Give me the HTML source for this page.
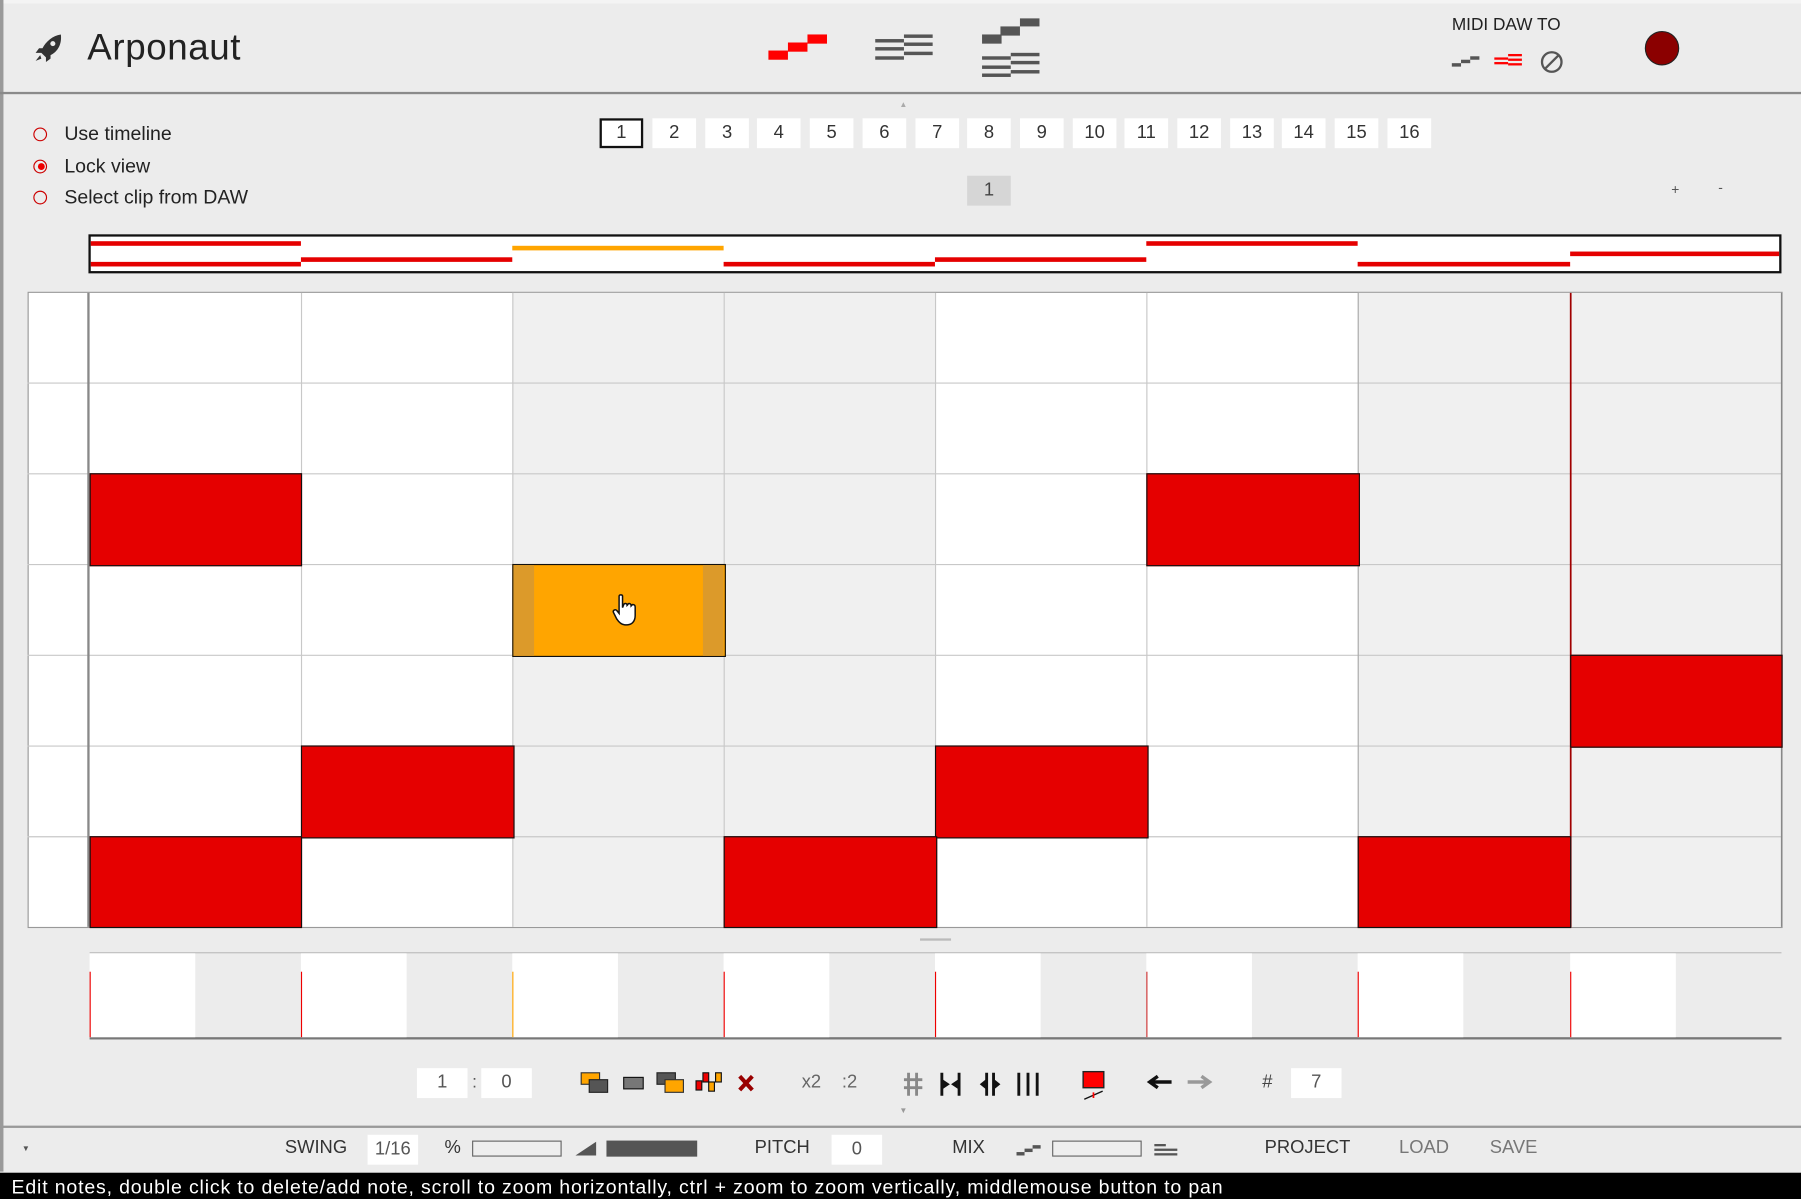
<!DOCTYPE html>
<html><head><meta charset="utf-8">
<style>
html,body{margin:0;padding:0;width:1801px;height:1199px;overflow:hidden;background:#ececec}
#w{position:absolute;left:0;top:0;width:1568px;height:1044px;transform:scale(1.1486);transform-origin:0 0;background:#ececec;font-family:"Liberation Sans",sans-serif;color:#222}
.a{position:absolute}
.t{position:absolute;white-space:nowrap;line-height:1}
.nb{position:absolute;top:103px;width:38px;height:26px;background:#fff;font-size:16px;text-align:center;line-height:26px;color:#333}
.radio{position:absolute;left:29px;width:12px;height:12px;border:1.5px solid #c00;border-radius:50%;box-sizing:border-box}
.note{position:absolute;background:#e50000;border:1px solid #111;box-sizing:border-box}
.ov{position:absolute;height:4px;background:#e50000}
.box{position:absolute;background:#fff;height:26px;top:930px;text-align:center;line-height:26px;font-size:16px;color:#555}
.g{position:absolute;background:#555;height:3px}
</style></head><body><div id="w">
<div class="a" style="left:0;top:0;width:1568px;height:3px;background:#f4f4f4"></div>
<div class="a" style="left:0;top:0;width:3px;height:1020px;background:#9a9a9a"></div>
<svg class="a" style="left:28px;top:28px" width="30" height="28" viewBox="0 0 30 28">
<path d="M25 2 C18 3 12 8 9 14 L6 14 L3 18 L8 18 L12 22 L12 26 L16 23 L16 20 C22 17 26 11 25 2Z" fill="#333"/>
<circle cx="18" cy="10" r="2.2" fill="#ececec"/>
<path d="M7 20 L3 25 L8 23Z" fill="#333"/></svg>
<div class="t" style="left:76px;top:25px;font-size:32px;color:#222;letter-spacing:0.5px">Arponaut</div>
<!-- mode icons -->
<div class="a" style="left:669px;top:44px;width:17px;height:8px;background:#f00"></div>
<div class="a" style="left:686px;top:37px;width:17px;height:8px;background:#f00"></div>
<div class="a" style="left:703px;top:30px;width:17px;height:8px;background:#f00"></div>
<div class="g" style="left:762px;top:34px;width:25px"></div>
<div class="g" style="left:762px;top:41px;width:25px"></div>
<div class="g" style="left:762px;top:49px;width:25px"></div>
<div class="g" style="left:787px;top:30px;width:25px"></div>
<div class="g" style="left:787px;top:37px;width:25px"></div>
<div class="g" style="left:787px;top:45px;width:25px"></div>
<div class="a" style="left:855px;top:30px;width:17px;height:8px;background:#555"></div>
<div class="a" style="left:871px;top:23px;width:17px;height:8px;background:#555"></div>
<div class="a" style="left:888px;top:16px;width:17px;height:7px;background:#555"></div>
<div class="g" style="left:855px;top:49px;width:25px"></div>
<div class="g" style="left:855px;top:57px;width:25px"></div>
<div class="g" style="left:855px;top:64px;width:25px"></div>
<div class="g" style="left:880px;top:46px;width:25px"></div>
<div class="g" style="left:880px;top:53px;width:25px"></div>
<div class="g" style="left:880px;top:61px;width:25px"></div>
<div class="t" style="left:1264px;top:14px;font-size:15px;color:#222">MIDI DAW TO</div>
<div class="a" style="left:1264px;top:55px;width:8px;height:3px;background:#555"></div>
<div class="a" style="left:1272px;top:52px;width:8px;height:3px;background:#555"></div>
<div class="a" style="left:1280px;top:49px;width:8px;height:3px;background:#555"></div>
<div class="a" style="left:1301px;top:50px;width:12px;height:2px;background:#f00"></div>
<div class="a" style="left:1301px;top:54px;width:12px;height:2px;background:#f00"></div>
<div class="a" style="left:1313px;top:47px;width:12px;height:2px;background:#f00"></div>
<div class="a" style="left:1313px;top:51px;width:12px;height:2px;background:#f00"></div>
<div class="a" style="left:1313px;top:55px;width:12px;height:2px;background:#f00"></div>
<svg class="a" style="left:1340px;top:43px" width="22" height="22"><circle cx="11" cy="11" r="8.5" fill="none" stroke="#555" stroke-width="2"/><line x1="5" y1="17" x2="17" y2="5" stroke="#555" stroke-width="2"/></svg>
<div class="a" style="left:1432px;top:27px;width:30px;height:30px;border-radius:50%;background:#8b0000;border:1px solid #222;box-sizing:border-box"></div>
<div class="a" style="left:0;top:80px;width:1568px;height:2px;background:#8a8a8a"></div>
<div class="t" style="left:783px;top:88px;font-size:7px;color:#aaa">▲</div>
<div class="radio" style="top:111px"></div>
<div class="t" style="left:56px;top:108px;font-size:17px">Use timeline</div>
<div class="radio" style="top:139px"></div><div class="a" style="left:33px;top:142px;width:6px;height:6px;border-radius:50%;background:#e00"></div>
<div class="t" style="left:56px;top:136px;font-size:17px">Lock view</div>
<div class="radio" style="top:166px"></div>
<div class="t" style="left:56px;top:163px;font-size:17px">Select clip from DAW</div>
<div class="nb" style="left:522px;border:2px solid #111;box-sizing:border-box;line-height:22px">1</div>
<div class="nb" style="left:568px">2</div><div class="nb" style="left:614px">3</div><div class="nb" style="left:659px">4</div>
<div class="nb" style="left:705px">5</div><div class="nb" style="left:751px">6</div><div class="nb" style="left:797px">7</div>
<div class="nb" style="left:842px">8</div><div class="nb" style="left:888px">9</div><div class="nb" style="left:934px">10</div>
<div class="nb" style="left:979px">11</div><div class="nb" style="left:1025px">12</div><div class="nb" style="left:1071px">13</div>
<div class="nb" style="left:1116px">14</div><div class="nb" style="left:1162px">15</div><div class="nb" style="left:1208px">16</div>
<div class="a" style="left:842px;top:153px;width:38px;height:26px;background:#d6d6d6;font-size:16px;text-align:center;line-height:26px;color:#444">1</div>
<div class="t" style="left:1455px;top:159px;font-size:12px;color:#555">+</div>
<div class="t" style="left:1496px;top:157px;font-size:12px;color:#555">-</div>
<div class="a" style="left:77px;top:204px;width:1474px;height:34px;background:#fff;border:2px solid #111;box-sizing:border-box"></div>
<div class="ov" style="left:79px;width:183px;top:210px"></div>
<div class="ov" style="left:79px;width:183px;top:228px"></div>
<div class="ov" style="left:262px;width:184px;top:224px"></div>
<div class="ov" style="left:446px;width:184px;top:214px;background:#ffa500"></div>
<div class="ov" style="left:630px;width:184px;top:228px"></div>
<div class="ov" style="left:814px;width:184px;top:224px"></div>
<div class="ov" style="left:998px;width:184px;top:210px"></div>
<div class="ov" style="left:1182px;width:185px;top:228px"></div>
<div class="ov" style="left:1367px;width:182px;top:219px"></div>
<div class="a" style="left:24px;top:254px;width:1528px;height:554px;border:1px solid #999;box-sizing:border-box;background:#fff"></div>
<div class="a" style="left:446px;top:255px;width:368px;height:552px;background:#f0f0f0"></div>
<div class="a" style="left:1182px;top:255px;width:369px;height:552px;background:#f0f0f0"></div>
<svg class="a" style="left:0;top:0" width="1568" height="1044">
<g stroke="#c8c8c8" stroke-width="1">
<line x1="24" y1="333.5" x2="1551" y2="333.5"/><line x1="24" y1="412.5" x2="1551" y2="412.5"/><line x1="24" y1="491.5" x2="1551" y2="491.5"/>
<line x1="24" y1="570.5" x2="1551" y2="570.5"/><line x1="24" y1="649.5" x2="1551" y2="649.5"/><line x1="24" y1="728.5" x2="1551" y2="728.5"/>
<line x1="262.5" y1="255" x2="262.5" y2="807"/><line x1="446.5" y1="255" x2="446.5" y2="807"/><line x1="630.5" y1="255" x2="630.5" y2="807"/>
<line x1="814.5" y1="255" x2="814.5" y2="807"/><line x1="998.5" y1="255" x2="998.5" y2="807"/><line x1="1182.5" y1="255" x2="1182.5" y2="807" stroke="#aaa"/>
</g>
<line x1="77" y1="255" x2="77" y2="807" stroke="#888" stroke-width="2"/>
<line x1="1367.5" y1="255" x2="1367.5" y2="807" stroke="#a00000" stroke-width="1.5"/>
<line x1="1551" y1="255" x2="1551" y2="807" stroke="#888" stroke-width="1"/>
</svg>
<div class="note" style="left:78px;top:412px;width:185px;height:81px"></div>
<div class="note" style="left:998px;top:412px;width:186px;height:81px"></div>
<div class="note" style="left:446px;top:491px;width:186px;height:81px;background:#ffa500"></div>
<div class="a" style="left:447px;top:492px;width:18px;height:79px;background:#dc9a2a"></div>
<div class="a" style="left:612px;top:492px;width:18px;height:79px;background:#dc9a2a"></div>
<svg class="a" style="left:533px;top:517px" width="24" height="30" viewBox="0 0 24 30"><path d="M6 2 C6 0.5 9 0.5 9 2 L9 12 L10 9.5 C10.5 8 13 8 13 10 L13.5 9.5 C14 8 16.5 8 16.5 10.5 L17 10 C17.5 9 20 9 20 11.5 L20 19 C20 24 17 27 13 27 L11 27 C8 27 6 25 4 22 L1 16 C0.5 14.5 2.5 13 4 14.5 L6 17Z" fill="#fff" stroke="#111" stroke-width="1.3"/></svg>
<div class="note" style="left:1367px;top:570px;width:185px;height:81px"></div>
<div class="note" style="left:262px;top:649px;width:186px;height:81px"></div>
<div class="note" style="left:814px;top:649px;width:186px;height:81px"></div>
<div class="note" style="left:78px;top:728px;width:185px;height:80px"></div>
<div class="note" style="left:630px;top:728px;width:186px;height:80px"></div>
<div class="note" style="left:1182px;top:728px;width:186px;height:80px"></div>
<div class="a" style="left:801px;top:817px;width:27px;height:2px;background:#bbb"></div>
<div class="a" style="left:78px;top:829px;width:1473px;height:76px;background:#ececec;border-top:1px solid #bbb;border-bottom:2px solid #777;box-sizing:border-box"></div>
<div class="a" style="left:78px;top:830px;width:92px;height:73px;background:#fff"></div>
<div class="a" style="left:262px;top:830px;width:92px;height:73px;background:#fff"></div>
<div class="a" style="left:446px;top:830px;width:92px;height:73px;background:#fff"></div>
<div class="a" style="left:630px;top:830px;width:92px;height:73px;background:#fff"></div>
<div class="a" style="left:814px;top:830px;width:92px;height:73px;background:#fff"></div>
<div class="a" style="left:998px;top:830px;width:92px;height:73px;background:#fff"></div>
<div class="a" style="left:1182px;top:830px;width:92px;height:73px;background:#fff"></div>
<div class="a" style="left:1367px;top:830px;width:92px;height:73px;background:#fff"></div>
<div class="a" style="left:78px;top:846px;width:1px;height:57px;background:#e00"></div>
<div class="a" style="left:262px;top:846px;width:1px;height:57px;background:#e00"></div>
<div class="a" style="left:446px;top:846px;width:1px;height:57px;background:#ffa500"></div>
<div class="a" style="left:630px;top:846px;width:1px;height:57px;background:#e00"></div>
<div class="a" style="left:814px;top:846px;width:1px;height:57px;background:#e00"></div>
<div class="a" style="left:998px;top:846px;width:1px;height:57px;background:#c33"></div>
<div class="a" style="left:1182px;top:846px;width:1px;height:57px;background:#e00"></div>
<div class="a" style="left:1367px;top:846px;width:1px;height:57px;background:#e00"></div>
<div class="box" style="left:363px;width:44px">1</div>
<div class="t" style="left:411px;top:935px;font-size:15px;color:#555">:</div>
<div class="box" style="left:419px;width:44px">0</div>
<svg class="a" style="left:505px;top:932px" width="160" height="24">
<rect x="1" y="2" width="16" height="10" fill="#ffa500" stroke="#333"/><rect x="8" y="8" width="16" height="11" fill="#555" stroke="#222"/>
<rect x="38" y="6" width="17" height="10" fill="#777" stroke="#111"/>
<rect x="67" y="2" width="16" height="10" fill="#555" stroke="#222"/><rect x="74" y="8" width="16" height="11" fill="#ffa500" stroke="#333"/>
<rect x="101" y="9" width="5" height="8" fill="#e00" stroke="#111"/><rect x="107" y="2" width="5" height="8" fill="#e00" stroke="#111"/><rect x="112" y="10" width="5" height="8" fill="#ffa500" stroke="#111"/><rect x="118" y="2" width="5" height="8" fill="#ffa500" stroke="#111"/>
<path d="M139 5 L150 17 M150 5 L139 17" stroke="#900" stroke-width="3.5"/>
</svg>
<div class="t" style="left:698px;top:935px;font-size:16px;color:#666">x2</div>
<div class="t" style="left:733px;top:935px;font-size:16px;color:#666">:2</div>
<svg class="a" style="left:786px;top:930px" width="130" height="28">
<path d="M5 4 V24 M12 4 V24 M1 10 H17 M1 17 H17" stroke="#888" stroke-width="2.5"/>
<path d="M34 4 V24 M49 4 V24" stroke="#111" stroke-width="2.5"/><path d="M35 10 L41 14 L35 18Z M48 10 L42 14 L48 18Z" fill="#111"/>
<path d="M73 4 V24 M79 4 V24" stroke="#111" stroke-width="2.5"/><path d="M72 10 L67 14 L72 18Z M80 10 L85 14 L80 18Z" fill="#111"/>
<path d="M101 4 V24 M109 4 V24 M117 4 V24" stroke="#111" stroke-width="2.5"/>
</svg>
<svg class="a" style="left:940px;top:930px" width="120" height="30">
<rect x="3" y="3" width="18" height="14" fill="#f00" stroke="#222" stroke-width="1.2"/>
<path d="M4 27 L20 20" stroke="#111" stroke-width="1.2"/><path d="M12 21 V26" stroke="#f00" stroke-width="1.5"/>
<path d="M80 12 H62 M68 7 L61 12 L68 17" stroke="#111" stroke-width="3" fill="none"/>
<path d="M94 12 H112 M106 7 L113 12 L106 17" stroke="#999" stroke-width="3" fill="none"/>
</svg>
<div class="t" style="left:1099px;top:935px;font-size:16px;color:#444">#</div>
<div class="box" style="left:1124px;width:44px">7</div>
<div class="t" style="left:783px;top:964px;font-size:7px;color:#999">▼</div>
<div class="a" style="left:0;top:980px;width:1568px;height:2px;background:#999"></div>
<div class="t" style="left:19px;top:997px;font-size:7px;color:#555">▼</div>
<div class="t" style="left:248px;top:992px;font-size:16px;color:#333">SWING</div>
<div class="a" style="left:320px;top:988px;width:44px;height:26px;background:#fff;font-size:16px;line-height:26px;text-align:center;color:#555">1/16</div>
<div class="t" style="left:387px;top:992px;font-size:16px;color:#333">%</div>
<div class="a" style="left:411px;top:993px;width:78px;height:14px;border:1px solid #666;box-sizing:border-box;background:#eee"></div>
<svg class="a" style="left:500px;top:993px" width="20" height="14"><path d="M1 13 L19 13 L19 1Z" fill="#555"/></svg>
<div class="a" style="left:528px;top:993px;width:79px;height:14px;background:#555"></div>
<div class="t" style="left:657px;top:992px;font-size:16px;color:#333">PITCH</div>
<div class="a" style="left:724px;top:988px;width:44px;height:26px;background:#fff;font-size:16px;line-height:26px;text-align:center;color:#555">0</div>
<div class="t" style="left:829px;top:992px;font-size:16px;color:#333">MIX</div>
<div class="a" style="left:885px;top:1003px;width:7px;height:3px;background:#555"></div>
<div class="a" style="left:892px;top:1000px;width:7px;height:3px;background:#555"></div>
<div class="a" style="left:899px;top:997px;width:7px;height:3px;background:#555"></div>
<div class="a" style="left:916px;top:993px;width:78px;height:14px;border:1px solid #666;box-sizing:border-box;background:#eee"></div>
<div class="a" style="left:1005px;top:996px;width:10px;height:2px;background:#555"></div>
<div class="a" style="left:1005px;top:1000px;width:20px;height:2px;background:#555"></div>
<div class="a" style="left:1005px;top:1004px;width:20px;height:2px;background:#555"></div>
<div class="t" style="left:1101px;top:992px;font-size:16px;color:#333">PROJECT</div>
<div class="t" style="left:1218px;top:992px;font-size:16px;color:#777">LOAD</div>
<div class="t" style="left:1297px;top:992px;font-size:16px;color:#777">SAVE</div>
<div class="a" style="left:0;top:1021px;width:1568px;height:23px;background:#000"></div>
<div class="t" style="left:10px;top:1025px;font-size:17px;color:#fff;letter-spacing:0.72px">Edit notes, double click to delete/add note, scroll to zoom horizontally, ctrl + zoom to zoom vertically, middlemouse button to pan</div>
</div></body></html>
